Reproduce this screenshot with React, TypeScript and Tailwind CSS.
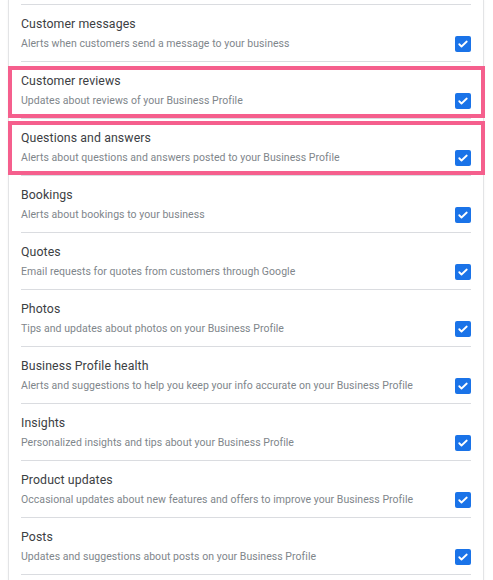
import React from "react";

type Item = { title: string; desc: string; hl?: "a" | "b" };

const items: Item[] = [
  { title: "Customer messages", desc: "Alerts when customers send a message to your business" },
  { title: "Customer reviews", desc: "Updates about reviews of your Business Profile", hl: "a" },
  { title: "Questions and answers", desc: "Alerts about questions and answers posted to your Business Profile", hl: "b" },
  { title: "Bookings", desc: "Alerts about bookings to your business" },
  { title: "Quotes", desc: "Email requests for quotes from customers through Google" },
  { title: "Photos", desc: "Tips and updates about photos on your Business Profile" },
  { title: "Business Profile health", desc: "Alerts and suggestions to help you keep your info accurate on your Business Profile" },
  { title: "Insights", desc: "Personalized insights and tips about your Business Profile" },
  { title: "Product updates", desc: "Occasional updates about new features and offers to improve your Business Profile" },
  { title: "Posts", desc: "Updates and suggestions about posts on your Business Profile" },
];

function Check() {
  return (
    <div className="w-[16px] h-[16px] rounded-[2px] bg-[#1a73e8] flex items-center justify-center shrink-0">
      <svg width="12" height="12" viewBox="0 0 24 24" fill="none">
        <path d="M4.5 12.5l4.5 4.5L19.5 7" stroke="white" strokeWidth="3.6" strokeLinecap="round" strokeLinejoin="round" />
      </svg>
    </div>
  );
}

export default function App() {
  return (
    <div className="w-[493px] h-[580px] bg-white overflow-hidden" style={{ fontFamily: "Roboto, 'Liberation Sans', sans-serif" }}>
      <div className="ml-[8px] w-[476px] border-x border-[#e3e4e6] px-[12px] pt-[4px] pb-[20px] shadow-[0_0_2px_rgba(0,0,0,0.06)]">
        {items.map((it) => (
          <div key={it.title} className="relative border-t border-[#dadce0] pt-[9px] pb-[9px] flex items-end">
            <div className="flex-1 min-w-0">
              <div className="text-[12.3px] leading-[20px] text-[#3c4043] tracking-[0.1px]">{it.title}</div>
              <div className="mt-[2px] text-[10.5px] leading-[16px] text-[#80868b] tracking-[0.05px]">{it.desc}</div>
            </div>
            <Check />
            {it.hl === "a" && (
              <div className="absolute left-[-13px] w-[477px] top-[4px] h-[52px] border-[4.5px] border-[#f55f8d] pointer-events-none" />
            )}
            {it.hl === "b" && (
              <div className="absolute left-[-13px] w-[477px] top-[2px] h-[54px] border-[4.5px] border-[#f55f8d] pointer-events-none" />
            )}
          </div>
        ))}
        <div className="border-t border-[#dadce0]" />
      </div>
    </div>
  );
}
